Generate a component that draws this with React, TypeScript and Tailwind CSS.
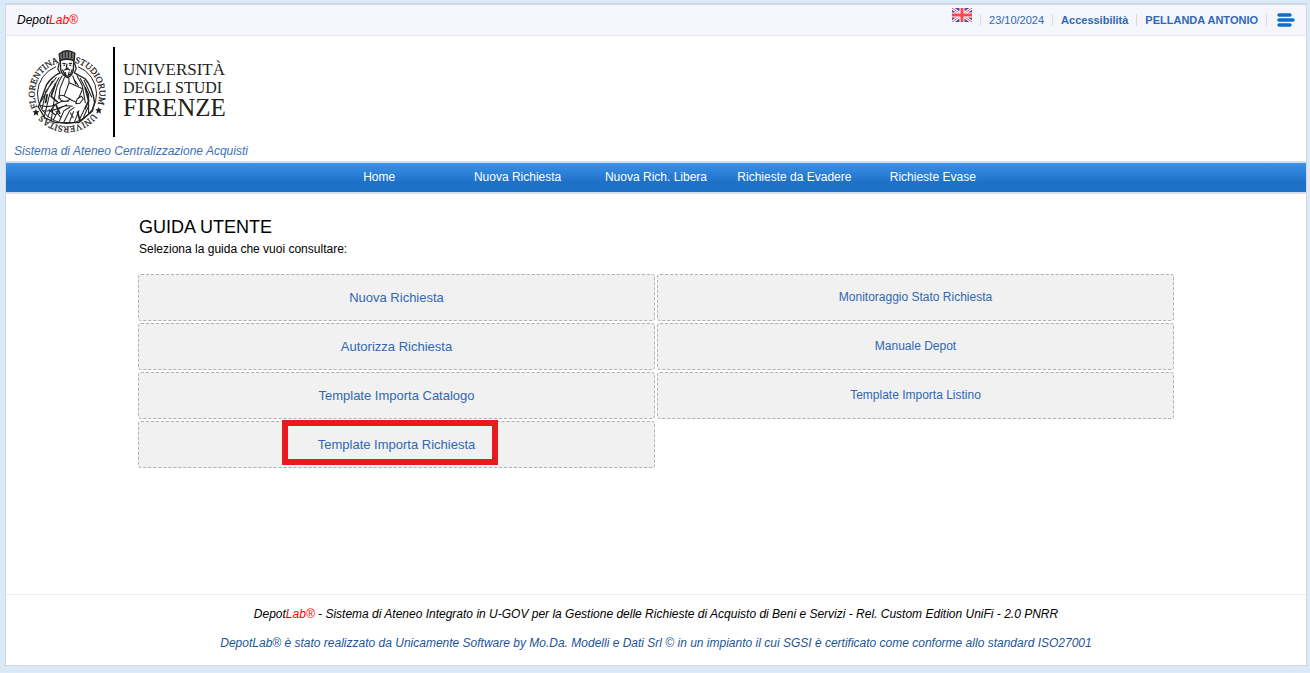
import React from "react";

interface Guide {
  label: string;
  highlighted?: boolean;
}

const menu = ["Home", "Nuova Richiesta", "Nuova Rich. Libera", "Richieste da Evadere", "Richieste Evase"];

const guides: Guide[] = [
  { label: "Nuova Richiesta" },
  { label: "Monitoraggio Stato Richiesta" },
  { label: "Autorizza Richiesta" },
  { label: "Manuale Depot" },
  { label: "Template Importa Catalogo" },
  { label: "Template Importa Listino" },
  { label: "Template Importa Richiesta", highlighted: true },
];

const Seal: React.FC = () => (
  <svg viewBox="0 4 270 270" className="size-[90px]" fill="none" stroke="#222" aria-hidden="true">
    <defs>
      <path id="ring-bottom" d="M135 242A97 97 0 0 1 135 48A97 97 0 0 1 135 242" />
      <path id="ring-top" d="M135 48A97 97 0 0 1 135 242A97 97 0 0 1 135 48" />
    </defs>
    <g fill="#222" stroke="#222" strokeWidth="0.8" fontSize="27" textAnchor="middle" className="font-['Liberation_Serif',serif]">
      <text><textPath href="#ring-bottom" startOffset="195">FLORENTINA</textPath></text>
      <text><textPath href="#ring-top" startOffset="103">STUDIORUM</textPath></text>
      <text><textPath href="#ring-top" startOffset="301">UNIVERSITAS</textPath></text>
    </g>
    <g fill="#222" stroke="none">
      <path d="M42 190l3 6 7 1-5 5 2 8-7-4-7 4 2-8-5-5 7-1z" />
      <path d="M230 184l3 6 7 1-5 5 2 8-7-4-7 4 2-8-5-5 7-1z" />
    </g>
    <path strokeWidth="3" d="M102 63A88 88 0 0 0 98 225M168 63A88 88 0 0 1 172 225M98 225Q135 242 172 225" />
    <g transform="translate(-8 0) scale(1.06 1.04)">
      {/* hat and head */}
      <path strokeWidth="4" fill="#777" d="M113 24Q134 6 157 22L155 43Q135 34 115 43z" />
      <path strokeWidth="3" d="M122 20v16M130 17v17M139 16v18M148 19v17" />
      <path strokeWidth="4" fill="#fff" d="M116 43Q134 35 154 43L153 68Q151 86 137 92Q122 87 117 69z" />
      <path strokeWidth="3.5" d="M122 51l9 1M140 52l9-1M135 52l-2 13h6M127 71q8-6 17 0M125 57h4M142 57h5M122 69l7 15 7 5 9-7 5-14M130 76l2 10M141 75l-2 10M113 49l-4 18 7 14M156 49l5 17-6 14" />
      {/* shoulders and cloak */}
      <path strokeWidth="4" d="M116 78Q91 90 77 113L54 177L72 208L102 222L169 222L207 188L213 164Q207 121 187 96L157 79" />
      <path strokeWidth="3" d="M122 86Q104 113 99 154L90 217M113 91L86 139L71 203M105 91L75 132L64 184M94 101L61 162M128 91L115 123L112 155M140 92L141 109M151 86L160 112M163 86L178 115L187 166M172 93L196 140L196 194M183 99L205 149M153 94L168 117" />
      <path strokeWidth="3" d="M58 172Q85 181 103 169T140 160M65 188Q94 190 112 180T151 175M80 207Q88 178 112 163M96 215L112 182L135 170M113 219L126 188L144 177M126 220L142 188L156 178M142 220L154 189M156 220L169 187M168 217L184 184M181 208L197 172M102 200l-19-16M118 208l-15-19M153 209l-9-16" />
      <path strokeWidth="5" d="M103 108L90 146L108 163M186 120L196 159L185 184M103 169L115 197M164 190L172 217M79 140L74 166" />
      {/* book and hands */}
      <path strokeWidth="3" fill="#fff" d="M141 107L179 124L163 164L126 147z" />
      <path strokeWidth="3" fill="#fff" d="M112 146q10-7 20 2l12 6q-11 10-26 4zM164 153l12-7 5 8-10 12-11 1z" />
    </g>
  </svg>
);

const Brand: React.FC = () => (
  <>
    Depot<span className="text-[#ff0000]">Lab®</span>
  </>
);

const Flag: React.FC = () => (
  <svg viewBox="0 0 20 14" className="h-3.5 w-5" aria-hidden="true">
    <path fill="#4a4f9c" d="M0 0h20v14H0z" />
    <path stroke="#fff" strokeWidth="3" d="M0 0l20 14M20 0L0 14" />
    <path stroke="#f0505a" d="M0 0l20 14M20 0L0 14" />
    <path stroke="#fff" strokeWidth="5" d="M10 0v14M0 7h20" />
    <path stroke="#ff4552" strokeWidth="3" d="M10 0v14M0 7h20" />
  </svg>
);

const Divider: React.FC = () => <span className="h-3 w-px bg-[#dcdcdc]" />;

const TopBar: React.FC = () => (
  <div className="flex h-[31px] items-center justify-between border-b border-[#e8e9ee] bg-[#f5f6fc] pr-[11px] pl-[11px]">
    <span className="text-[12px] italic">
      <Brand />
    </span>
    <div className="flex items-center gap-2 text-[11px] text-[#2f68b4]">
      <button aria-label="English" className="mb-2.5">
        <Flag />
      </button>
      <Divider />
      <span>23/10/2024</span>
      <Divider />
      <a href="#accessibilita" className="font-bold">Accessibilità</a>
      <Divider />
      <a href="#profilo" className="font-bold">PELLANDA ANTONIO</a>
      <Divider />
      <button aria-label="Menu" className="pl-0.5">
        <svg viewBox="0 0 18 14" className="h-3.5 w-[18px]" stroke="#0a6fce" strokeWidth="3.4" strokeLinecap="round">
          <path d="M2 2h11M2 7h14M2 12h11" />
        </svg>
      </button>
    </div>
  </div>
);

const Header: React.FC = () => (
  <header>
    <TopBar />
    <div className="px-2 pt-[11px] pb-0.5">
      <div className="flex items-center pl-2">
        <Seal />
        <div className="ml-px flex h-[90px] items-center border-l-2 border-black pb-1 pl-2 font-['Liberation_Serif',serif] text-[#222]">
          <div>
            <p className="text-[17px] leading-[18px]">UNIVERSITÀ</p>
            <p className="text-[16px] leading-[17px]">DEGLI STUDI</p>
            <p className="text-[25px] leading-[24px]">FIRENZE</p>
          </div>
        </div>
      </div>
      <p className="mt-1.5 text-[12px] leading-4 text-[#3c70bb] italic">Sistema di Ateneo Centralizzazione Acquisti</p>
    </div>
  </header>
);

const App: React.FC = () => {
  return (
    <div className="flex min-h-screen flex-col bg-[#dce9f7] pt-[3px] pr-[3px] pb-[7px] pl-[5px] font-['Liberation_Sans',Arial,sans-serif] text-black">
      <div className="flex flex-1 flex-col border border-t-2 border-[#cfd9e5] bg-white">
        <Header />
        <nav className="border-y-2 border-[#d5e0ec] bg-linear-to-b from-[#3b92e8] to-[#1f71c8] to-65%">
          <div className="mx-auto grid h-[29px] w-full max-w-[692px] grid-cols-5 items-center pb-0.5 text-center text-[12px] text-white">
            {menu.map((item) => (
              <a key={item} href="#menu">{item}</a>
            ))}
          </div>
        </nav>

        <main className="mx-auto w-4/5 flex-1 pt-[21px]">
          <div className="px-[3px]">
            <h1 className="text-[18px] leading-6">GUIDA UTENTE</h1>
            <p className="text-[12px] leading-5">Seleziona la guida che vuoi consultare:</p>
          </div>
          <div className="mt-[13px] grid grid-cols-2 gap-0.5 p-0.5">
            {guides.map((guide) => (
              <div
                key={guide.label}
                className="relative flex h-[47px] items-center justify-center rounded-[3px] border border-dashed border-[#b0b0b0] bg-[#f1f1f1] text-[13px] text-[#3068b2] even:pb-0.5 even:text-[12px]"
              >
                <a href="#guida">{guide.label}</a>
                {guide.highlighted && (
                  <span className="pointer-events-none absolute -top-0.5 left-[143px] h-[45px] w-[216px] border-6 border-[#ea1a1c]" />
                )}
              </div>
            ))}
          </div>
        </main>

        <footer className="border-t border-[#eeeeee] pt-2.5 pb-[13px] text-center text-[12px] italic">
          <p className="leading-[18px]">
            <Brand /> - Sistema di Ateneo Integrato in U-GOV per la Gestione delle Richieste di Acquisto di Beni e Servizi - Rel. Custom Edition UniFi - 2.0 PNRR
          </p>
          <p className="mt-[11px] leading-[18px] text-[#1d5596]">
            DepotLab® è stato realizzato da Unicamente Software by Mo.Da. Modelli e Dati Srl © in un impianto il cui SGSI è certificato come conforme allo standard ISO27001
          </p>
        </footer>
      </div>
    </div>
  );
};

export default App;
